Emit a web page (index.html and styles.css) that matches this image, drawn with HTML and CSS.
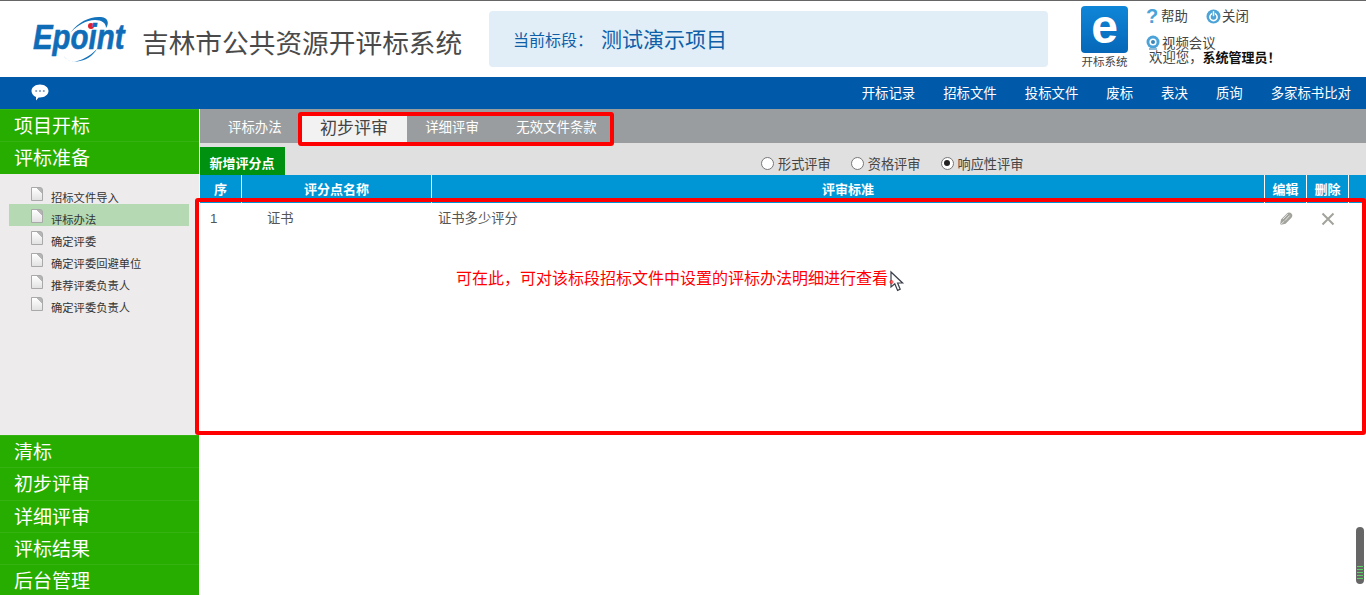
FILE: index.html
```html
<!DOCTYPE html>
<html lang="zh-CN">
<head>
  <meta charset="UTF-8">
  <meta name="viewport" content="width=device-width, initial-scale=1.0">
  <title>吉林市公共资源开评标系统</title>
  <link rel="stylesheet" href="styles.css">
</head>
<body>

  <!-- Header -->
  <div class="header">
    <div class="logo">
      <svg class="logo-arc" width="94" height="62" viewBox="0 0 94 62">
        <path d="M38 16C46 5 58 0 68 1C76 2 76 8 73 12C73 7 69 4 62 4C53 4 45 9 38 16Z" fill="#1272bb"/>
        <path d="M31 40C34 46 42 47 50 43C56 40 60 37 64 33C60 40 52 45 44 45.5C38 46 33 44 31 40Z" fill="#1272bb"/>
        <circle cx="58" cy="10" r="3" fill="#e0202c"/>
      </svg>
      <span class="logo-text">Epoint</span>
    </div>
    <div class="site-title">吉林市公共资源开评标系统</div>
    <div class="current-section">
      <span class="section-label">当前标段：</span>
      <span class="section-name">测试演示项目</span>
    </div>
    <div class="app-entry">
      <div class="app-icon">e</div>
      <div class="app-name">开标系统</div>
    </div>
    <div class="user-box">
      <div class="user-links">
        <span class="user-link link-help"><span class="help-mark">?</span>帮助</span>
        <span class="user-link">
          <svg width="15" height="15" viewBox="0 0 15 15"><circle cx="7.5" cy="7.5" r="7" fill="#4ba3d8"/><circle cx="7.5" cy="8" r="3.6" fill="none" stroke="#fff" stroke-width="1.6"/><rect x="6.2" y="1.6" width="2.6" height="6" fill="#4ba3d8"/><rect x="6.8" y="2.2" width="1.4" height="5" fill="#fff"/></svg>关闭
        </span>
      </div>
      <div class="user-video">
        <svg width="14" height="15" viewBox="0 0 14 15"><circle cx="7" cy="7" r="6.5" fill="#4ba3d8"/><circle cx="7" cy="7" r="3.6" fill="#fff"/><circle cx="7" cy="7" r="2" fill="#3a86b8"/><rect x="3" y="13" width="8" height="2" fill="#8fb9d4"/></svg>视频会议
      </div>
      <div class="welcome">欢迎您，<b>系统管理员！</b></div>
    </div>
  </div>

  <!-- Blue nav bar -->
  <div class="navbar">
    <svg class="chat-icon" width="18" height="17" viewBox="0 0 18 17">
      <path d="M9 0.5C13.7 0.5 17.5 3.4 17.5 7C17.5 10.6 13.7 13.5 9 13.5L7.6 13.4L5 16.5L5 12.9C2.3 11.8 0.5 9.6 0.5 7C0.5 3.4 4.3 0.5 9 0.5Z" fill="#fff"/>
      <circle cx="5.2" cy="7" r="1.1" fill="#7d9cc4"/><circle cx="9" cy="7" r="1.1" fill="#7d9cc4"/><circle cx="12.8" cy="7" r="1.1" fill="#7d9cc4"/>
    </svg>
    <div class="nav-links">
      <span>开标记录</span>
      <span>招标文件</span>
      <span>投标文件</span>
      <span>废标</span>
      <span>表决</span>
      <span>质询</span>
      <span>多家标书比对</span>
    </div>
  </div>

  <div class="main">
    <!-- Left menu -->
    <div class="sidebar">
      <div class="menu-head">项目开标</div>
      <div class="menu-head">评标准备</div>
      <div class="tree">
        <div class="tree-item"><i class="doc"></i>招标文件导入</div>
        <div class="tree-item active"><i class="doc"></i>评标办法</div>
        <div class="tree-item"><i class="doc"></i>确定评委</div>
        <div class="tree-item"><i class="doc"></i>确定评委回避单位</div>
        <div class="tree-item"><i class="doc"></i>推荐评委负责人</div>
        <div class="tree-item"><i class="doc"></i>确定评委负责人</div>
      </div>
      <div class="menu-head">清标</div>
      <div class="menu-head">初步评审</div>
      <div class="menu-head">详细评审</div>
      <div class="menu-head">评标结果</div>
      <div class="menu-head">后台管理</div>
    </div>

    <!-- Right content -->
    <div class="content">
      <div class="tabs">
        <span class="tab tab-method">评标办法</span>
        <span class="tab tab-active">初步评审</span>
        <span class="tab tab-detail">详细评审</span>
        <span class="tab tab-invalid">无效文件条款</span>
      </div>
      <div class="toolbar">
        <span class="add-btn">新增评分点</span>
        <div class="radios">
          <label class="radio"><i class="radio-dot"></i>形式评审</label>
          <label class="radio"><i class="radio-dot"></i>资格评审</label>
          <label class="radio"><i class="radio-dot checked"></i>响应性评审</label>
        </div>
      </div>
      <div class="grid grid-head">
        <div>序</div>
        <div>评分点名称</div>
        <div>评审标准</div>
        <div>编辑</div>
        <div>删除</div>
        <div></div>
      </div>
      <div class="grid grid-row">
        <div class="cell-no">1</div>
        <div class="cell-name">证书</div>
        <div class="cell-rule">证书多少评分</div>
        <div class="cell-icon">
          <svg width="14" height="14" viewBox="0 0 14 14"><path d="M1 13L2 7.6L7.6 1.8C9 .4 11 .2 12.4 1.4C13.8 2.8 13.6 4.6 12.2 6L6.6 11.8Z" fill="#a3a39d"/><path d="M1 13L5.2 9.2M4 7L8.8 2M6 8.6L10.6 3.6" stroke="#fff" stroke-width=".7" fill="none"/></svg>
        </div>
        <div class="cell-icon">
          <svg width="14" height="14" viewBox="0 0 14 14"><path d="M1.5 1.5L12.5 12.5M12.5 1.5L1.5 12.5" stroke="#a3a39d" stroke-width="2" fill="none"/></svg>
        </div>
        <div></div>
      </div>

      <!-- Annotations drawn on the screenshot -->
      <div class="mark mark-tabs"></div>
      <div class="mark mark-table"></div>
      <div class="note">可在此，可对该标段招标文件中设置的评标办法明细进行查看</div>
      <svg class="cursor" width="14" height="21" viewBox="0 0 14 21">
        <path d="M1 1L1 16L4.8 12.8L7.6 19.4L10.2 18.2L7.6 12L12.6 12Z" fill="#fff" stroke="#3b3f4a" stroke-width="1.2"/>
        <circle cx="1.5" cy="11" r="1.5" fill="none" stroke="#f00" stroke-width=".8"/>
      </svg>
    </div>
  </div>

  <!-- Page scroll thumb -->
  <div class="scroll-thumb"><i></i></div>

</body>
</html>
```

FILE: styles.css
```css
html, body { height: 595px; overflow: hidden; }
body { margin: 0; padding: 0; background-color: #fff; color: #444; font-family: "Liberation Sans", "Noto Sans CJK SC", sans-serif; font-size: 13.4px; }
i { display: block; }

/* header */
.header { display: flex; height: 76px; border-top: 1px solid #666; box-sizing: content-box; }
.logo { position: relative; width: 142px; flex: none; }
.logo-arc { position: absolute; left: 33px; top: 15px; }
.logo-text { position: absolute; left: 33px; top: 14px; color: #0f6db8; font: italic bold 35px/44px "Liberation Sans", sans-serif; -webkit-text-stroke: 0.6px #0f6db8; transform: scaleX(.84); transform-origin: left; }
.site-title { width: 347px; flex: none; padding-top: 24px; font-size: 26.7px; line-height: 38px; color: #4a4a4a; white-space: nowrap; }
.current-section { display: flex; align-items: center; width: 535px; height: 53px; flex: none; margin-top: 10px; padding: 0 0 3px 24px; background-color: #e1eef7; border-radius: 4px; color: #0f5fa8; }
.section-label { font-size: 16px; margin-top: 3px; margin-right: 8px; }
.section-name { font-size: 21px; }
.app-entry { width: 47px; flex: none; margin: 5px 0 0 33px; text-align: center; }
.app-icon { height: 47px; border-radius: 4px; background: linear-gradient(#0f86d8, #0667b8); color: #fff; font: bold 48px/42px "Liberation Sans", sans-serif; }
.app-name { font-size: 11.5px; line-height: 14px; margin: 2px -4px 0; white-space: nowrap; }
.user-box { flex: none; width: 190px; padding-left: 18px; position: relative; }
.user-links { display: flex; gap: 16px; height: 30px; padding-top: 0; line-height: 17px; box-sizing: border-box; }
.user-link { display: flex; align-items: center; gap: 1px; height: 30px; }
.link-help { width: 44px; }
.help-mark { color: #4ba3d8; font: bold 20px/17px "Liberation Sans", sans-serif; width: 14px; }
.user-video { display: flex; align-items: center; gap: 2px; height: 16px; margin-top: 3px; }
.welcome { margin-top: 1px; margin-left: 3px; line-height: 14px; color: #444; white-space: nowrap; }
.welcome b { color: #111; font-size: 13px; }

/* nav */
.navbar { display: flex; justify-content: space-between; align-items: center; height: 32px; background-color: #0059a9; color: #fff; }
.chat-icon { margin-left: 31px; margin-top: -1px; }
.nav-links { display: flex; gap: 28px; padding: 0 15px 2px 0; }

/* layout */
.main { display: flex; height: 486px; }
.sidebar { width: 199px; flex: none; }
.content { flex: 1; margin-left: 1px; position: relative; }

/* left menu */
.menu-head { height: 32px; padding-left: 14px; background-color: #27ac00; border-top: 1px solid #35b312; box-sizing: content-box; color: #fff; font-size: 19px; line-height: 34.5px; margin-bottom: -0.6px; }
.tree { height: 253px; padding: 8px 10px 0 9px; background-color: #edebec; }
.tree-item { display: flex; align-items: center; height: 22px; box-sizing: border-box; padding: 8px 0 0 22px; font-size: 11.3px; color: #333; }
.tree-item.active { background-color: #b5d9b2; }
.doc { width: 10px; height: 12px; margin-right: 8px; margin-top: -5px; background: linear-gradient(225deg, #b5b5b5 4px, transparent 4px), linear-gradient(#fff, #e2e2e2); border: 1px solid #a9a9a9; border-top-right-radius: 3px; }

/* tabs */
.tabs { display: flex; height: 34px; align-items: center; background-color: #9a9da0; color: #fff; }
.tab { text-align: center; }
.tab-method { width: 53px; margin: 0 20px 0 28px; white-space: nowrap; }
.tab-active { width: 106px; height: 26px; margin-top: 6px; background-color: #f2f2f2; color: #444; font-size: 17px; line-height: 26px; }
.tab-detail { width: 90px; }
.tab-invalid { width: 119px; }

/* toolbar */
.toolbar { display: flex; align-items: flex-end; height: 32px; background-color: #e0e0e0; }
.add-btn { width: 84px; height: 28px; padding-right: 1px; background-color: #009111; color: #fff; font-size: 13px; font-weight: bold; line-height: 34px; text-align: center; }
.radios { display: flex; gap: 20px; margin-left: 476px; height: 26px; align-items: center; }
.radio { display: flex; align-items: center; gap: 4px; font-size: 13.2px; color: #444; margin-top: 2px; }
.radio-dot { width: 11px; height: 11px; border-radius: 50%; border: 1px solid #777; background-color: #fff; position: relative; }
.radio-dot.checked::after { content: ""; position: absolute; left: 2.5px; top: 2.5px; width: 6px; height: 6px; border-radius: 50%; background-color: #222; }

/* table */
.grid { display: grid; grid-template-columns: 42px 190px 833px 42px 42px 1fr; }
.grid-head { height: 28px; background-color: #0096d6; color: #fff; font-weight: bold; font-size: 13px; line-height: 29px; text-align: center; }
.grid-head > div { border-right: 1px solid #fff; }
.grid-head > div:last-child { border-right: none; }
.grid-row { height: 30px; line-height: 30px; padding-top: 1px; color: #555; font-size: 13.3px; }
.cell-no { padding-left: 10px; }
.cell-name { padding-left: 25px; }
.cell-rule { padding-left: 6px; }
.cell-icon { display: flex; justify-content: center; align-items: center; }

/* red marks over the page */
.mark { position: absolute; border: 4px solid #f00; border-radius: 3px; box-sizing: border-box; }
.mark-tabs { left: 98px; top: 3px; width: 316px; height: 34px; }
.mark-table { left: -5px; top: 89px; width: 1171px; height: 237px; }
.note { position: absolute; left: 256px; top: 160px; color: #f00; font-size: 16px; line-height: 20px; white-space: nowrap; }
.cursor { position: absolute; left: 690px; top: 162px; overflow: visible; }

/* scroll thumb */
.scroll-thumb { position: absolute; left: 1356px; top: 527px; width: 8px; height: 57px; border-radius: 4px; background-color: #666; }
.scroll-thumb i { position: absolute; left: 1px; bottom: 3px; width: 6px; height: 15px; background: repeating-linear-gradient(#5fd068 0 1px, #666 1px 3px); }
```
